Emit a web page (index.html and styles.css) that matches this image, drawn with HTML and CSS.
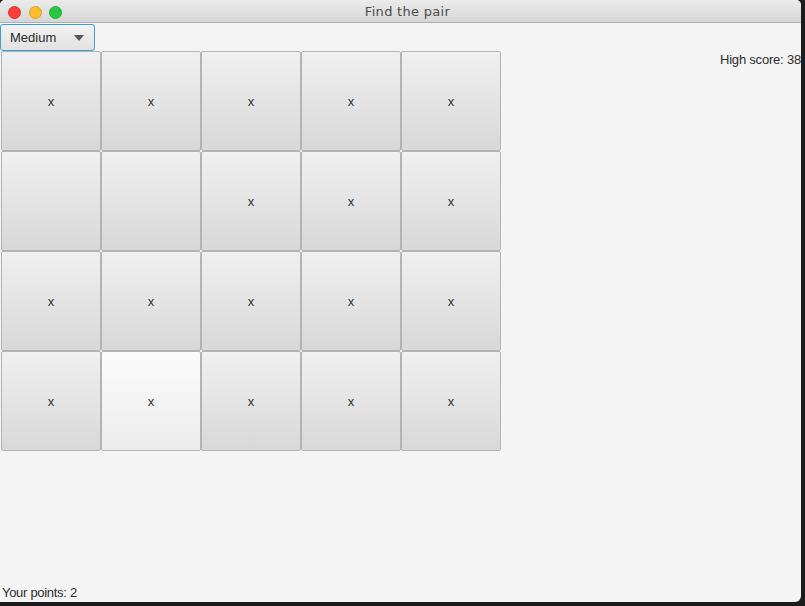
FILE: index.html
```html
<!DOCTYPE html>
<html>
<head>
<meta charset="utf-8">
<link rel="stylesheet" href="styles.css">
</head>
<body>
<div class="window">
  <div class="titlebar">
    <div class="lights">
      <span class="light red"></span>
      <span class="light yellow"></span>
      <span class="light green"></span>
    </div>
    <div class="title">Find the pair</div>
  </div>
  <div class="content">
    <div class="top">
      <div class="combo"><span class="combo-text">Medium</span><span class="arrow"></span></div>
    </div>
    <div class="middle">
      <div class="grid">
        <div class="cell">x</div><div class="cell">x</div><div class="cell">x</div><div class="cell">x</div><div class="cell">x</div>
        <div class="cell"></div><div class="cell"></div><div class="cell">x</div><div class="cell">x</div><div class="cell">x</div>
        <div class="cell">x</div><div class="cell">x</div><div class="cell">x</div><div class="cell">x</div><div class="cell">x</div>
        <div class="cell">x</div><div class="cell hover">x</div><div class="cell">x</div><div class="cell">x</div><div class="cell">x</div>
      </div>
      <div class="spacer"></div>
      <div class="highscore">High score: 38</div>
    </div>
    <div class="bottom">Your points: 2</div>
  </div>
</div>
</body>
</html>
```
FILE: styles.css
```css
html, body {
  margin: 0;
  padding: 0;
}
body {
  width: 805px;
  height: 606px;
  background: #1c1c1c;
  overflow: hidden;
  font-family: "Liberation Sans", Arial, sans-serif;
  font-size: 13px;
  color: #333;
}
.window {
  width: 801px;
  height: 602px;
  background: #f4f4f4;
  border-radius: 5px 5px 6px 0;
  overflow: hidden;
  display: flex;
  flex-direction: column;
}
.titlebar {
  height: 22px;
  flex: none;
  position: relative;
  background: linear-gradient(#ebebeb, #d6d6d6);
  border-bottom: 1px solid #b1b1b1;
  display: flex;
  align-items: center;
  justify-content: center;
}
.lights {
  position: absolute;
  left: 8px;
  top: 6px;
  display: flex;
  gap: 7.5px;
}
.light {
  width: 13px;
  height: 13px;
  border-radius: 50%;
  display: block;
  box-sizing: border-box;
}
.red { background: #fc3d3a; border: 0.5px solid #e0302c; }
.yellow { background: #fdbb2d; border: 0.5px solid #e0a020; }
.green { background: #28c940; border: 0.5px solid #1eaa30; }
.title {
  font-family: "DejaVu Sans", "Liberation Sans", sans-serif;
  font-size: 13px;
  letter-spacing: 0.3px;
  color: #4d4d4d;
  padding-top: 1px;
  padding-left: 14px;
}
.content {
  flex: 1;
  display: flex;
  flex-direction: column;
}
.top {
  height: 28px;
  padding: 1px 0 0 0;
  box-sizing: border-box;
  flex: none;
}
.combo {
  width: 95px;
  height: 27px;
  box-sizing: border-box;
  border: 1.5px solid #3ca0d8;
  border-radius: 3px;
  background: linear-gradient(#f2f2f2, #e2e2e2);
  display: flex;
  align-items: center;
  justify-content: space-between;
  padding: 0 10px 0 9px;
  color: #2b2b2b;
}
.arrow {
  width: 0;
  height: 0;
  border-left: 5px solid transparent;
  border-right: 5px solid transparent;
  border-top: 6px solid #555;
}
.middle {
  flex: 1;
  display: flex;
  align-items: flex-start;
}
.grid {
  margin-left: 1px;
  display: grid;
  grid-template-columns: repeat(5, 100px);
  grid-template-rows: repeat(4, 100px);
}
.cell {
  box-sizing: border-box;
  border: 1px solid #b3b3b3;
  border-radius: 2px;
  background: linear-gradient(#f0f0f0, #d8d8d8);
  display: flex;
  align-items: center;
  justify-content: center;
  color: #333;
  font-size: 13px;
}
.cell.hover {
  background: linear-gradient(#fbfbfb, #ececec);
}
.spacer {
  flex: 1;
}
.highscore {
  margin-top: 1px;
  line-height: 16px;
  color: #2e2e2e;
  white-space: nowrap;
  letter-spacing: -0.2px;
}
.bottom {
  flex: none;
  height: 17px;
  line-height: 16px;
  padding-left: 2px;
  color: #2e2e2e;
  letter-spacing: -0.3px;
}
```
